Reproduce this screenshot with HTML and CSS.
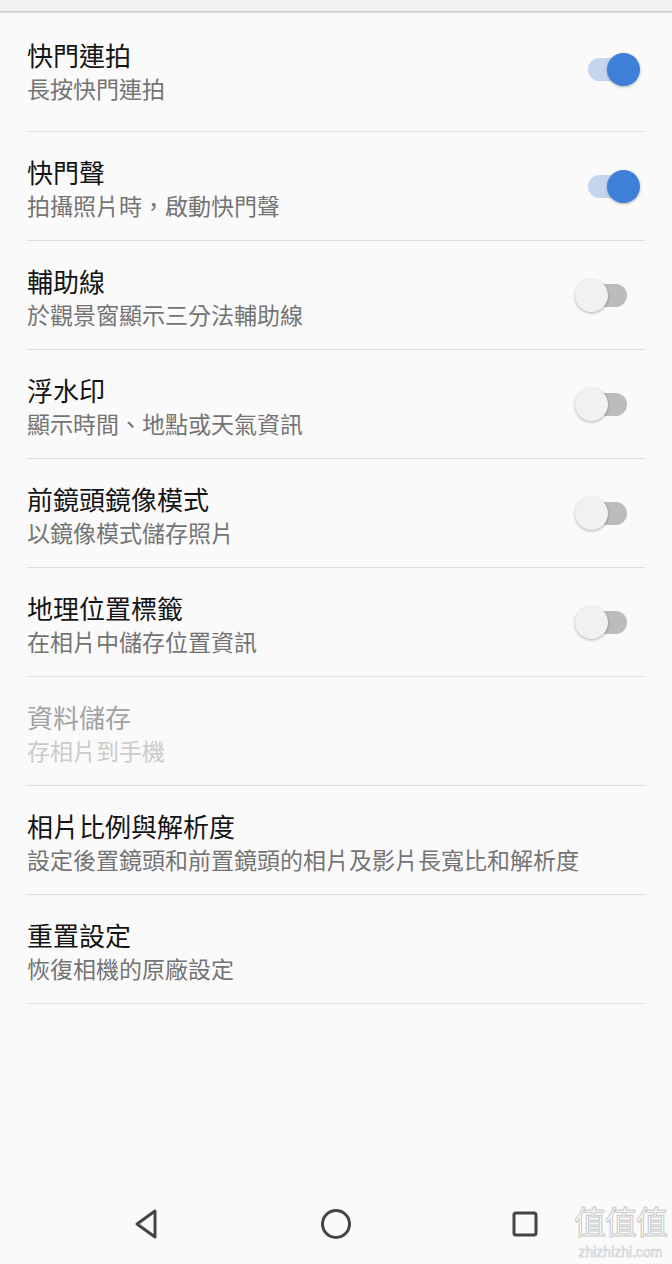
FILE: index.html
```html
<!DOCTYPE html>
<html lang="zh-Hant">
<head>
    <meta charset="UTF-8">
    <meta name="viewport" content="width=device-width, initial-scale=1.0">
    <title>相機設定</title>
    <link rel="stylesheet" href="styles.css">
</head>
<body>
    <div class="screen">
        <div class="top-bar"></div>

        <ul class="settings">
            <li class="row">
                <div class="text">
                    <div class="title">快門連拍</div>
                    <div class="summary">長按快門連拍</div>
                </div>
                <div class="switch on"><span class="track"></span><span class="thumb"></span></div>
            </li>
            <li class="row">
                <div class="text">
                    <div class="title">快門聲</div>
                    <div class="summary">拍攝照片時，啟動快門聲</div>
                </div>
                <div class="switch on"><span class="track"></span><span class="thumb"></span></div>
            </li>
            <li class="row">
                <div class="text">
                    <div class="title">輔助線</div>
                    <div class="summary">於觀景窗顯示三分法輔助線</div>
                </div>
                <div class="switch"><span class="track"></span><span class="thumb"></span></div>
            </li>
            <li class="row">
                <div class="text">
                    <div class="title">浮水印</div>
                    <div class="summary">顯示時間、地點或天氣資訊</div>
                </div>
                <div class="switch"><span class="track"></span><span class="thumb"></span></div>
            </li>
            <li class="row">
                <div class="text">
                    <div class="title">前鏡頭鏡像模式</div>
                    <div class="summary">以鏡像模式儲存照片</div>
                </div>
                <div class="switch"><span class="track"></span><span class="thumb"></span></div>
            </li>
            <li class="row">
                <div class="text">
                    <div class="title">地理位置標籤</div>
                    <div class="summary">在相片中儲存位置資訊</div>
                </div>
                <div class="switch"><span class="track"></span><span class="thumb"></span></div>
            </li>
            <li class="row disabled">
                <div class="text">
                    <div class="title">資料儲存</div>
                    <div class="summary">存相片到手機</div>
                </div>
            </li>
            <li class="row">
                <div class="text">
                    <div class="title">相片比例與解析度</div>
                    <div class="summary">設定後置鏡頭和前置鏡頭的相片及影片長寬比和解析度</div>
                </div>
            </li>
            <li class="row">
                <div class="text">
                    <div class="title">重置設定</div>
                    <div class="summary">恢復相機的原廠設定</div>
                </div>
            </li>
        </ul>

        <nav class="nav-bar">
            <svg class="nav-icon" viewBox="0 0 32 32" width="32" height="32">
                <path d="M24 3 L6 16 L24 29 Z" fill="none" stroke="#444" stroke-width="3" stroke-linejoin="round"/>
            </svg>
            <svg class="nav-icon" viewBox="0 0 32 32" width="32" height="32">
                <circle cx="16" cy="16" r="13.5" fill="none" stroke="#444" stroke-width="3"/>
            </svg>
            <svg class="nav-icon" viewBox="0 0 32 32" width="32" height="32">
                <rect x="5" y="5" width="22" height="22" rx="2" fill="none" stroke="#444" stroke-width="3"/>
            </svg>
        </nav>

        <div class="watermark">
            <span class="mark">值值值</span>
            <span class="site">zhizhizhi.com</span>
        </div>
    </div>
</body>
</html>
```

FILE: styles.css
```css
* {
    margin: 0;
    padding: 0;
    box-sizing: border-box;
}

body {
    font-family: "Noto Sans CJK TC", "Noto Sans", sans-serif;
    background-color: #fafafa;
    color: #212121;
}

.screen {
    position: relative;
    display: flex;
    flex-direction: column;
    height: 1264px;
    overflow: hidden;
}

.top-bar {
    height: 11px;
    background-color: #f1f1f1;
    box-shadow: 0 1px 2px rgba(0, 0, 0, 0.28);
}

.settings {
    list-style-type: none;
    padding: 4px 27px 0;
    flex: 1;
}

.row {
    display: flex;
    align-items: center;
    justify-content: space-between;
    padding: 24px 0 20px;
    border-bottom: 1px solid #dcdcdc;
}

.row:first-child {
    padding-bottom: 28px;
}

.title {
    font-size: 26px;
    line-height: 32px;
    color: #141414;
}

.summary {
    margin-top: 2px;
    font-size: 23px;
    line-height: 30px;
    color: #747474;
}

.row.disabled .title {
    color: #a2a2a2;
}

.row.disabled .summary {
    color: #cbcbcb;
}

/* toggle switch */
.switch {
    position: relative;
    width: 52px;
    height: 33px;
    margin-right: 18px;
    margin-top: -3px;
}

.switch .track {
    position: absolute;
    top: 5px;
    left: 5px;
    width: 47px;
    height: 23px;
    border-radius: 12px;
    background-color: #bcbcbc;
}

.switch .thumb {
    position: absolute;
    top: 0;
    left: 0;
    width: 33px;
    height: 33px;
    border-radius: 50%;
    background-color: #f1f1f1;
    box-shadow: 0 1px 3px rgba(0, 0, 0, 0.3);
}

.switch.on {
    margin-right: 5px;
}

.switch.on .track {
    left: 0;
    background-color: #c4d6ef;
}

.switch.on .thumb {
    left: auto;
    right: 0;
    background-color: #3e7fda;
}

/* bottom navigation */
.nav-bar {
    height: 80px;
    display: flex;
    align-items: center;
    justify-content: center;
    gap: 157px;
}

.watermark {
    position: absolute;
    right: 5px;
    bottom: 4px;
    display: flex;
    flex-direction: column;
    align-items: center;
    color: #ffffff;
}

.watermark .mark {
    font-family: "Noto Sans CJK SC", sans-serif;
    font-size: 32px;
    line-height: 47px;
    letter-spacing: -1px;
    -webkit-text-stroke: 1px #c8c8c8;
}

.watermark .site {
    font-family: "Liberation Sans", sans-serif;
    font-size: 14px;
    line-height: 16px;
    -webkit-text-stroke: 0.6px #c8c8c8;
}
```
